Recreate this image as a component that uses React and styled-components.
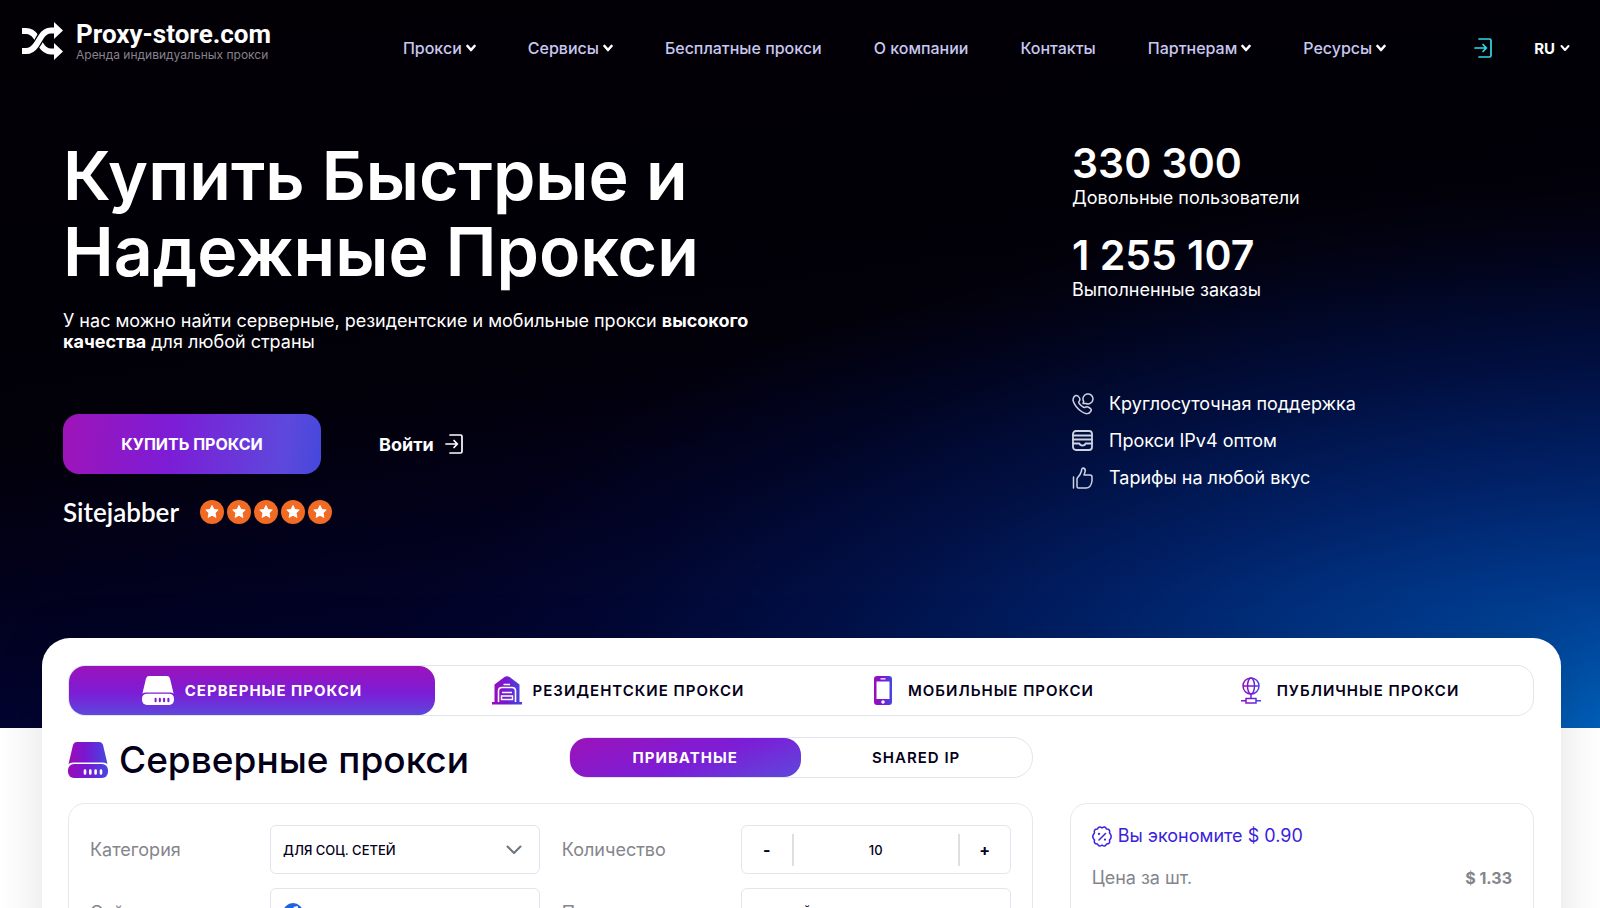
import * as React from "react";
import styled, { createGlobalStyle } from "styled-components";

const GlobalStyle = createGlobalStyle`
  * {
    box-sizing: border-box;
  }

  body {
    margin: 0;
    font-family: Inter, "Open Sans", sans-serif;
    background: #ffffff;
    color: #04001a;
    height: 100vh;
    overflow: hidden;
  }

  h1, h2, p, ul, dl, dd {
    margin: 0;
    padding: 0;
  }

  a {
    color: inherit;
    text-decoration: none;
  }

  button {
    border: 0;
    padding: 0;
    background: none;
    font-family: inherit;
    color: inherit;
    cursor: pointer;
  }
`;

const Hero = styled.div`
  min-height: 728px;
  padding-bottom: 200px;
  color: #ffffff;
  background:
    radial-gradient(
      ellipse 84% 84% at 106% 108%,
      #006ac8 0%,
      rgba(0, 92, 180, 0.98) 14%,
      rgba(0, 60, 144, 0.94) 34%,
      rgba(0, 38, 112, 0.85) 52%,
      rgba(0, 22, 82, 0.65) 70%,
      rgba(0, 14, 64, 0.3) 86%,
      rgba(0, 8, 40, 0) 100%
    ),
    linear-gradient(172deg, #020005 0%, #020008 46%, #02011c 62%, #030538 82%, #060a4c 100%);
`;

const Header = styled.header`
  display: flex;
  align-items: center;
  justify-content: space-between;
  height: 96px;
  padding: 0 30px 0 22px;
`;

const Logo = styled.a`
  display: flex;
  align-items: center;
  gap: 13px;
  padding-bottom: 14px;
`;

const LogoName = styled.span`
  display: block;
  font-family: Roboto, sans-serif;
  font-size: 26px;
  line-height: 28px;
  font-weight: 700;
`;

const LogoNote = styled.span`
  display: block;
  font-size: 12px;
  line-height: 14px;
  color: #85838c;
`;

const Nav = styled.nav`
  display: flex;
  gap: 52px;
  margin-left: 44px;
`;

const NavLink = styled.a`
  display: flex;
  align-items: center;
  gap: 4px;
  font-size: 16px;
  font-weight: 500;
  color: #c9c8f0;
  white-space: nowrap;

  svg {
    color: #ffffff;
  }
`;

const HeaderTools = styled.div`
  display: flex;
  align-items: center;
  gap: 42px;
`;

const HeaderLogin = styled.a`
  display: flex;
`;

const Language = styled.button`
  display: flex;
  align-items: center;
  gap: 5px;
  font-size: 15px;
  font-weight: 700;
`;

const Intro = styled.div`
  display: grid;
  grid-template-columns: 1009fr 465fr;
  padding: 41px 63px 0;
`;

const Title = styled.h1`
  font-size: 68px;
  line-height: 76px;
  font-weight: 600;
`;

const Lead = styled.p`
  margin-top: 21px;
  font-size: 18px;
  line-height: 21px;
  max-width: 720px;
`;

const Actions = styled.div`
  display: flex;
  align-items: center;
  gap: 58px;
  margin-top: 62px;
`;

const BuyButton = styled.button`
  width: 258px;
  height: 60px;
  border-radius: 16px;
  background: linear-gradient(97deg, #9f14b8 0%, #7c1dd6 42%, #5e48dc 85%, #4548dc 100%);
  font-size: 16px;
  font-weight: 700;
`;

const LoginLink = styled.a`
  display: flex;
  align-items: center;
  gap: 11px;
  font-size: 18px;
  font-weight: 700;
`;

const Rating = styled.div`
  display: flex;
  align-items: center;
  gap: 21px;
  margin-top: 23px;
`;

const RatingName = styled.span`
  font-family: Lato, sans-serif;
  font-size: 26px;
  line-height: 30px;
  font-weight: 600;
`;

const Stars = styled.div`
  display: flex;
  gap: 3px;
`;

const Facts = styled.div`
  padding-top: 2px;
`;

const Counter = styled.p`
  margin-bottom: 22px;
  font-size: 18px;
  line-height: 22px;
`;

const CounterValue = styled.strong`
  display: block;
  font-size: 41px;
  line-height: 48px;
  font-weight: 600;
`;

const Benefits = styled.ul`
  margin-top: 84px;
  list-style: none;
`;

const Benefit = styled.li`
  display: flex;
  align-items: center;
  gap: 15px;
  height: 37px;
  font-size: 18px;

  svg {
    color: #cdd3e2;
  }
`;

const Card = styled.main`
  position: relative;
  margin: -90px 39px 0 42px;
  padding: 27px 27px 27px 26px;
  border-radius: 28px 28px 0 0;
  background: #ffffff;
  box-shadow: 0 0 50px rgba(0, 0, 0, 0.12);
`;

const Tabs = styled.div`
  display: grid;
  grid-template-columns: repeat(4, 1fr);
  height: 51px;
  border: 1px solid #dfe6ee;
  border-radius: 17px;
`;

const Tab = styled.button`
  display: flex;
  align-items: center;
  justify-content: center;
  gap: ${(props) => (props.$wide ? "16px" : "11px")};
  border-radius: 16px;
  background: ${(props) =>
    props.$active ? "linear-gradient(180deg, #9b13b9 0%, #7c1dd6 55%, #5e48dc 100%)" : "none"};
  color: ${(props) => (props.$active ? "#ffffff" : "#04001a")};
  font-size: 15px;
  font-weight: ${(props) => (props.$active ? 700 : 600)};
  letter-spacing: 1px;
`;

const Columns = styled.div`
  display: grid;
  grid-template-columns: 964fr 464fr;
  column-gap: 37px;
`;

const Heading = styled.div`
  display: flex;
  justify-content: space-between;
  align-items: center;
  height: 87px;
`;

const SectionTitle = styled.h2`
  display: flex;
  align-items: center;
  gap: 11px;
  font-size: 37px;
  line-height: 44px;
  font-weight: 500;
`;

const Switch = styled.div`
  display: grid;
  grid-template-columns: 1fr 1fr;
  width: 464px;
  height: 41px;
  margin-bottom: 5px;
  border: 1px solid #dfe6ee;
  border-radius: 20px;
`;

const SwitchButton = styled.button`
  border-radius: 17px;
  background: ${(props) =>
    props.$active ? "linear-gradient(160deg, #9b13b9 0%, #7c1dd6 55%, #5e48dc 100%)" : "none"};
  color: ${(props) => (props.$active ? "#ffffff" : "#04001a")};
  font-size: 15px;
  font-weight: ${(props) => (props.$active ? 700 : 600)};
  letter-spacing: 1px;
`;

const Panel = styled.section`
  padding: 21px;
  border: 1px solid #e4e9f0;
  border-radius: 17px;
`;

const Fields = styled(Panel)`
  display: grid;
  grid-template-columns: 180px minmax(0, 1fr) 201px minmax(0, 1fr);
  grid-auto-rows: 49px;
  align-items: center;
  row-gap: 14px;
`;

const Label = styled.label`
  padding-left: ${(props) => (props.$second ? "22px" : "0")};
  font-size: 18px;
  color: #85858c;
`;

const Field = styled.div`
  display: flex;
  align-items: center;
  gap: 8px;
  height: 49px;
  padding: 0 17px 0 12px;
  border: 1px solid #dfe6ee;
  border-radius: 6px;
  color: #6c757d;
`;

const Select = styled.select`
  flex: 1;
  min-width: 0;
  height: 46px;
  border: 0;
  padding: 0;
  appearance: none;
  background: none;
  font: 500 13px Inter, sans-serif;
  color: #04001a;
`;

const Stepper = styled(Field)`
  gap: 0;
  padding: 0;
  color: #04001a;
`;

const StepButton = styled.button`
  width: 50px;
  height: 46px;
  font-size: 16px;
  font-weight: 700;
`;

const StepInput = styled.input`
  flex: 1;
  min-width: 0;
  height: 32px;
  border: 2px solid #dfdfe2;
  border-width: 0 2px;
  background: none;
  text-align: center;
  font: 500 13px Inter, sans-serif;
  color: #04001a;
`;

const Savings = styled.p`
  display: flex;
  align-items: center;
  gap: 6px;
  font-size: 18px;
  line-height: 22px;
  color: #3a22dc;
`;

const PriceRow = styled.dl`
  display: flex;
  justify-content: space-between;
  margin-top: 20px;
  font-size: 18px;
  line-height: 22px;
  color: #85858c;
`;

const Price = styled.dd`
  font-size: 16px;
  font-weight: 700;
`;

const Icon = styled.svg`
  flex: none;
  fill: none;
  stroke: currentColor;
  stroke-linecap: round;
  stroke-linejoin: round;
`;

const Chevron = ({ size = 10, width = 2.6 }) => (
  <Icon width={size} height={size} viewBox="0 0 10 10" strokeWidth={width}>
    <path d="M1.5 3L5 7L8.5 3" />
  </Icon>
);

const SelectArrow = () => (
  <Icon width="16" height="10" viewBox="0 0 16 10" strokeWidth="2">
    <path d="M1.500 1.500L8 8L14.500 1.500" />
  </Icon>
);

const LoginIcon = ({ color = "currentColor" }) => (
  <svg width="18" height="20" viewBox="0 0 18 20" fill="none" stroke={color} strokeWidth="1.700" strokeLinecap="round">
    <path d="M5 1H15.500Q17 1 17 2.500V17.500Q17 19 15.500 19H5M1 10H12M9 6.500L12.300 10L9 13.500" />
  </svg>
);

const Gradient = ({ id }) => (
  <linearGradient id={id}>
    <stop offset="0" stopColor="#9b0cb8" />
    <stop offset="0.45" stopColor="#7817d2" />
    <stop offset="1" stopColor="#4548e0" />
  </linearGradient>
);

const ServerIcon = ({ width, height, fill, dots }) => (
  <svg width={width} height={height} viewBox="0 0 40 36">
    <defs>
      <Gradient id="server" />
    </defs>
    <path fill={fill} d="M9 0H31Q34 0 35 3L39.5 22Q38 20.500 35 20.500H5Q2 20.500 .5 22L5 3Q6 0 9 0Z" />
    <rect fill={fill} y="22" width="40" height="14" rx="6" />
    <path stroke={dots} strokeWidth="2.600" strokeLinecap="round" d="M17 28.500V31.500M22.300 28.500V31.500M27.600 28.500V31.500M33 28.500V31.500" />
  </svg>
);

const HomeIcon = () => (
  <svg width="30" height="29" viewBox="0 0 30 29">
    <defs>
      <Gradient id="home" />
    </defs>
    <path fill="url(#home)" d="M2.500 8.500L12.500 1Q15 -.5 17.500 1L27.500 8.500V26H30V28.500H0V26H2.500Z" />
    <path fill="none" stroke="#ffffff" strokeWidth="1.600" d="M11.500 8.500H18M6.500 26V15Q6.500 11.500 10 11.500H20Q23.500 11.500 23.500 15V26" />
    <path fill="none" stroke="#ffffff" strokeWidth="1.400" d="M10 16.500H20M9.500 20H20.500V23.500H9.500Z" />
  </svg>
);

const PhoneIcon = () => (
  <svg width="18" height="29" viewBox="0 0 18 29">
    <defs>
      <Gradient id="phone" />
    </defs>
    <rect width="18" height="29" rx="3" fill="url(#phone)" />
    <path fill="#ffffff" d="M2.500 5.500H15.500V23H2.500ZM6.500 2.300H11.500V3.500H6.500Z" />
    <circle cx="9" cy="26" r="1.800" fill="#ffffff" />
  </svg>
);

const GlobeIcon = () => (
  <svg width="20" height="27" viewBox="0 0 20 27" fill="none" stroke="url(#globe)" strokeWidth="1.500">
    <defs>
      <linearGradient id="globe" gradientUnits="userSpaceOnUse" x1="0" y1="0" x2="20" y2="0">
        <stop offset="0" stopColor="#9b0cb8" />
        <stop offset="0.45" stopColor="#7817d2" />
        <stop offset="1" stopColor="#4548e0" />
      </linearGradient>
    </defs>
    <circle cx="10" cy="9" r="8" />
    <ellipse cx="10" cy="9" rx="3.500" ry="8" />
    <path d="M2 9H18M10 17V21.500M5 21.500H15V26H5ZM0 23.700H5M15 23.700H20" />
  </svg>
);

const DiscountIcon = () => (
  <Icon width="20" height="21" viewBox="0 0 20 21" strokeWidth="1.500">
    <path d="M10 2Q13-.5 14.500 3Q18.500 3 17.500 7Q21 10.500 17.500 14Q18.500 18 14.500 18Q13 21.500 10 19Q7 21.500 5.500 18Q1.500 18 2.500 14Q-1 10.500 2.500 7Q1.500 3 5.500 3Q7-.5 10 2ZM7 14L13.500 7.500" />
    <path strokeWidth="2.200" d="M7 7.800V7.900M13 13.500V13.600" />
  </Icon>
);

const Star = () => (
  <svg width="24" height="24" viewBox="0 0 24 24">
    <circle cx="12" cy="12" r="12" fill="#f26b24" />
    <path fill="#ffffff" stroke="#ffffff" strokeLinejoin="round" d="M12 5.500L13.900 9.600L18.200 10L15 13L15.900 17.400L12 15.200L8.100 17.400L9 13L5.800 10L10.100 9.600Z" />
  </svg>
);

const LogoMark = () => (
  <svg width="41" height="38" viewBox="0 0 41 38" fill="none">
    <path stroke="#ffffff" strokeWidth="6" d="M0 9H4Q10 9 14 15L19 23Q23 29.500 29 29.500H33" />
    <path stroke="#020005" strokeWidth="8.500" d="M10 27Q13 25 16 20L20 13Q22 10.500 24 9.500" />
    <path stroke="#ffffff" strokeWidth="6" d="M0 29H4Q10 29 14 23L19 15Q23 8.500 29 8.500H33" />
    <path fill="#ffffff" d="M32 0L41 8.500L32 17ZM32 21L41 29.500L32 38Z" />
  </svg>
);

const SupportIcon = () => (
  <Icon width="22" height="22" viewBox="0 0 22 22" strokeWidth="1.500">
    <path d="M11 10.500L11.700 8.500A5 5 0 1 1 14 10.500ZM4 2.500Q6 2 7.500 5Q8.500 7 7 8.500Q6 9.500 8.500 12T13 14.500Q14.500 13 17 14.500Q20 16 19 18Q16 23 9.500 18.500T1 7.500Q1 3.500 4 2.500Z" />
  </Icon>
);

const RackIcon = () => (
  <Icon width="22" height="22" viewBox="0 0 22 22" strokeWidth="1.800">
    <rect x="1" y="1" width="19" height="19" rx="3" />
    <path d="M1 5.500H20M1 9.500H20M1 13.500H7.500Q8 15.500 10.500 15.500T13.500 13.500H20" />
  </Icon>
);

const LikeIcon = () => (
  <Icon width="22" height="22" viewBox="0 0 22 22" strokeWidth="1.500">
    <path d="M1.500 10V21M5 11.500Q8.500 8 9.500 4Q9.500 1 11.500 1Q14 2 13 5L12 8H18Q20 8 20 10V14Q19 21 14 21H6.500Q5 21 5 19.500Z" />
  </Icon>
);

const FacebookIcon = () => (
  <svg width="20" height="20" viewBox="0 0 20 20">
    <circle cx="10" cy="10" r="10" fill="#1f63e0" />
    <path fill="none" stroke="#ffffff" strokeWidth="2.600" d="M15 4.500H13.500Q11 4.500 11 7V20M8 11H14.500" />
  </svg>
);

const navItems = [
  { text: "Прокси", menu: true },
  { text: "Сервисы", menu: true },
  { text: "Бесплатные прокси" },
  { text: "О компании" },
  { text: "Контакты" },
  { text: "Партнерам", menu: true },
  { text: "Ресурсы", menu: true }
];

const App = () => {
  const [count, setCount] = React.useState(10);
  return (
    <>
      <GlobalStyle />
      <Hero>
        <Header>
          <Logo href="#">
            <LogoMark />
            <span>
              <LogoName>Proxy-store.com</LogoName>
              <LogoNote>Аренда индивидуальных прокси</LogoNote>
            </span>
          </Logo>
          <Nav>
            {navItems.map((item) => (
              <NavLink href="#" key={item.text}>
                {item.text}
                {item.menu && <Chevron />}
              </NavLink>
            ))}
          </Nav>
          <HeaderTools>
            <HeaderLogin href="#" aria-label="Войти">
              <LoginIcon color="#2bdcea" />
            </HeaderLogin>
            <Language>
              RU <Chevron width={2} />
            </Language>
          </HeaderTools>
        </Header>
        <Intro>
          <div>
            <Title>
              Купить Быстрые и
              <br />
              Надежные Прокси
            </Title>
            <Lead>
              У нас можно найти серверные, резидентские и мобильные прокси <b>высокого качества</b> для любой страны
            </Lead>
            <Actions>
              <BuyButton>КУПИТЬ ПРОКСИ</BuyButton>
              <LoginLink href="#">
                Войти <LoginIcon />
              </LoginLink>
            </Actions>
            <Rating>
              <RatingName>Sitejabber</RatingName>
              <Stars>
                {[1, 2, 3, 4, 5].map((n) => (
                  <Star key={n} />
                ))}
              </Stars>
            </Rating>
          </div>
          <Facts>
            <Counter>
              <CounterValue>330 300</CounterValue>
              Довольные пользователи
            </Counter>
            <Counter>
              <CounterValue>1 255 107</CounterValue>
              Выполненные заказы
            </Counter>
            <Benefits>
              <Benefit>
                <SupportIcon /> Круглосуточная поддержка
              </Benefit>
              <Benefit>
                <RackIcon /> Прокси IPv4 оптом
              </Benefit>
              <Benefit>
                <LikeIcon /> Тарифы на любой вкус
              </Benefit>
            </Benefits>
          </Facts>
        </Intro>
      </Hero>
      <Card>
        <Tabs>
          <Tab $active>
            <ServerIcon width={32} height={29} fill="#ffffff" dots="#7c1dd6" />
            СЕРВЕРНЫЕ ПРОКСИ
          </Tab>
          <Tab>
            <HomeIcon />
            РЕЗИДЕНТСКИЕ ПРОКСИ
          </Tab>
          <Tab $wide>
            <PhoneIcon />
            МОБИЛЬНЫЕ ПРОКСИ
          </Tab>
          <Tab $wide>
            <GlobeIcon />
            ПУБЛИЧНЫЕ ПРОКСИ
          </Tab>
        </Tabs>
        <Columns>
          <Heading>
            <SectionTitle>
              <ServerIcon width={40} height={36} fill="url(#server)" dots="#ffffff" />
              Серверные прокси
            </SectionTitle>
            <Switch>
              <SwitchButton $active>ПРИВАТНЫЕ</SwitchButton>
              <SwitchButton>SHARED IP</SwitchButton>
            </Switch>
          </Heading>
          <div />
          <Fields>
            <Label htmlFor="category">Категория</Label>
            <Field>
              <Select id="category">
                <option>ДЛЯ СОЦ. СЕТЕЙ</option>
              </Select>
              <SelectArrow />
            </Field>
            <Label htmlFor="count" $second>Количество</Label>
            <Stepper>
              <StepButton onClick={() => setCount(count - 1)}>-</StepButton>
              <StepInput id="count" value={count} onChange={(e) => setCount(Number(e.target.value))} />
              <StepButton onClick={() => setCount(count + 1)}>+</StepButton>
            </Stepper>
            <Label htmlFor="site">Сайт</Label>
            <Field>
              <FacebookIcon />
              <Select id="site">
                <option>FACEBOOK</option>
              </Select>
              <SelectArrow />
            </Field>
            <Label htmlFor="period" $second>Период</Label>
            <Field>
              <Select id="period">
                <option>30 ДНЕЙ</option>
              </Select>
              <SelectArrow />
            </Field>
          </Fields>
          <Panel>
            <Savings>
              <DiscountIcon /> Вы экономите $ 0.90
            </Savings>
            <PriceRow>
              <dt>Цена за шт.</dt>
              <Price>$ 1.33</Price>
            </PriceRow>
          </Panel>
        </Columns>
      </Card>
    </>
  );
};

export default App;
